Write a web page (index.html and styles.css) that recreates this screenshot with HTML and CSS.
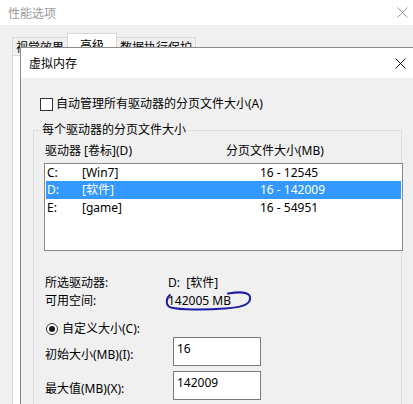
FILE: index.html
```html
<!DOCTYPE html>
<html lang="zh-CN">
<head>
<meta charset="utf-8">
<title>虚拟内存</title>
<link rel="stylesheet" href="styles.css">
</head>
<body>
<div class="win">
  <div class="win-title">
    <span>性能选项</span>
    <svg class="x-icon" width="11" height="11" viewBox="0 0 11 11"><path d="M0.5 0.5 L10.5 10.5 M10.5 0.5 L0.5 10.5" stroke="#9a9a9a" stroke-width="1" fill="none"/></svg>
  </div>
  <div class="win-body">
    <div class="tabs">
      <div class="tab">视觉效果</div>
      <div class="tab active">高级</div>
      <div class="tab">数据执行保护</div>
    </div>
    <div class="tab-page"></div>
  </div>

  <div class="dialog">
    <div class="dlg-title">
      <span>虚拟内存</span>
      <svg class="x-icon" width="11" height="11" viewBox="0 0 11 11"><path d="M0.5 0.5 L10.5 10.5 M10.5 0.5 L0.5 10.5" stroke="#111" stroke-width="1" fill="none"/></svg>
    </div>
    <div class="dlg-body">
      <div class="check-row"><span class="checkbox"></span><span>自动管理所有驱动器的分页文件大小(A)</span></div>
      <fieldset class="group">
        <legend>每个驱动器的分页文件大小</legend>
        <div class="cols">
          <span class="col-a">驱动器 [卷标](D)</span>
          <span>分页文件大小(MB)</span>
        </div>
        <div class="listbox">
          <div class="row"><span class="c1">C:</span><span class="c2">[Win7]</span><span>16 - 12545</span></div>
          <div class="row selected"><span class="c1">D:</span><span class="c2">[软件]</span><span>16 - 142009</span></div>
          <div class="row"><span class="c1">E:</span><span class="c2">[game]</span><span>16 - 54951</span></div>
        </div>
        <div class="info">
          <div class="info-row"><span class="info-label">所选驱动器:</span><span>D:&nbsp;&nbsp;[软件]</span></div>
          <div class="info-row"><span class="info-label">可用空间:</span><span class="circled">142005 MB<svg class="ink" width="90" height="22" viewBox="0 0 90 22"><path d="M64 3.5 C74 2, 85 1, 86 7 C87 14, 80 17, 61 18.5 C41 20, 16 20, 7 17.5 C1 15.5, 2 8, 6 5" stroke="#1d1da6" stroke-width="2" fill="none" stroke-linecap="round"/></svg></span></div>
        </div>
        <div class="radio-row"><span class="radio"></span><span>自定义大小(C):</span></div>
        <div class="field-row"><span class="field-label">初始大小(MB)(I):</span><div class="input">16</div></div>
        <div class="field-row second"><span class="field-label">最大值(MB)(X):</span><div class="input">142009</div></div>
      </fieldset>
    </div>
  </div>
</div>
</body>
</html>
```

FILE: styles.css
```css
* { box-sizing: border-box; }

body {
  margin: 0;
  width: 413px;
  height: 404px;
  overflow: hidden;
  font-family: "Noto Sans", "Noto Sans CJK SC", sans-serif;
  font-size: 12px;
  color: #000;
  background: #f0f0f0;
}

.win {
  position: relative;
  height: 404px;
}

.win-title {
  height: 25px;
  background: #fff;
  display: flex;
  align-items: center;
  justify-content: space-between;
  padding: 0 5px 0 8px;
  color: #9a9a9a;
}

.x-icon { display: block; }

.win-body {
  background: #f0f0f0;
  padding: 8px 0 0 12px;
}

.tabs {
  display: flex;
  align-items: flex-end;
  height: 22px;
}

.tab {
  height: 18px;
  border: 1px solid #d9d9d9;
  border-bottom: none;
  padding: 2px 3px 0;
  line-height: 16px;
  background: #f0f0f0;
  color: #000;
}

.tab.active {
  height: 22px;
  background: #fff;
  padding: 4px 12px 0;
  margin: 0 -1px;
  position: relative;
}

.tab-page {
  height: 360px;
  background: #fff;
  border: 1px solid #d9d9d9;
}

.dialog {
  position: absolute;
  left: 20px;
  top: 47px;
  width: 400px;
  height: 370px;
  background: #f0f0f0;
  border-left: 1px solid #8c8c8c;
  border-top: 1px solid #8c8c8c;
}

.dlg-title {
  height: 30px;
  background: #fff;
  display: flex;
  align-items: center;
  justify-content: space-between;
  padding: 0 14px 0 8px;
}

.dlg-body {
  padding: 18px 0 0 12px;
}

.check-row {
  display: flex;
  align-items: center;
  height: 16px;
  line-height: 16px;
  padding-left: 7px;
  gap: 3px;
}

.checkbox {
  width: 13px;
  height: 13px;
  border: 1px solid #333;
  background: #fff;
}

.group {
  margin: 11px 0 0 0;
  padding: 0 0 0 11px;
  width: 369px;
  height: 300px;
  min-width: 0;
  border: 1px solid #dcdcdc;
}

.group legend {
  padding: 0 1px;
  margin-left: -4px;
  line-height: 14px;
  height: 14px;
}

.cols {
  display: flex;
  height: 16px;
  line-height: 16px;
  margin-top: 6px;
}

.col-a { width: 181px; }

.listbox {
  margin: 4px 0 0 -1px;
  width: 359px;
  height: 88px;
  border: 1px solid #828790;
  background: #fff;
}

.row {
  display: flex;
  height: 18px;
  line-height: 18px;
  margin: 0 1px;
  padding-left: 1px;
}

.row:first-child {
  height: 17px;
  line-height: 17px;
}

.row.selected {
  background: #3399ff;
  color: #fff;
}

.c1 { width: 35px; }
.c2 { width: 178px; }

.info { margin-top: 23px; }

.info-row {
  display: flex;
  height: 18px;
  line-height: 18px;
}

.info-label { width: 123px; }

.circled { position: relative; }

.ink {
  position: absolute;
  left: -4px;
  top: -2px;
}

.radio-row {
  display: flex;
  align-items: center;
  height: 16px;
  line-height: 16px;
  margin-top: 11px;
  padding-left: 1px;
  gap: 4px;
}

.radio {
  width: 12px;
  height: 12px;
  border: 1px solid #333;
  border-radius: 50%;
  background: #fff;
  display: flex;
  align-items: center;
  justify-content: center;
}

.radio::after {
  content: "";
  width: 6px;
  height: 6px;
  border-radius: 50%;
  background: #1a1a1a;
}

.field-row {
  display: flex;
  align-items: flex-start;
}

.field-row.second { margin-top: 5px; }

.field-label {
  width: 128px;
  padding-top: 10px;
  line-height: 16px;
}

.input {
  width: 88px;
  height: 29px;
  border: 1px solid #7a7a7a;
  background: #fff;
  padding: 3px 3px;
  line-height: 16px;
}
```
